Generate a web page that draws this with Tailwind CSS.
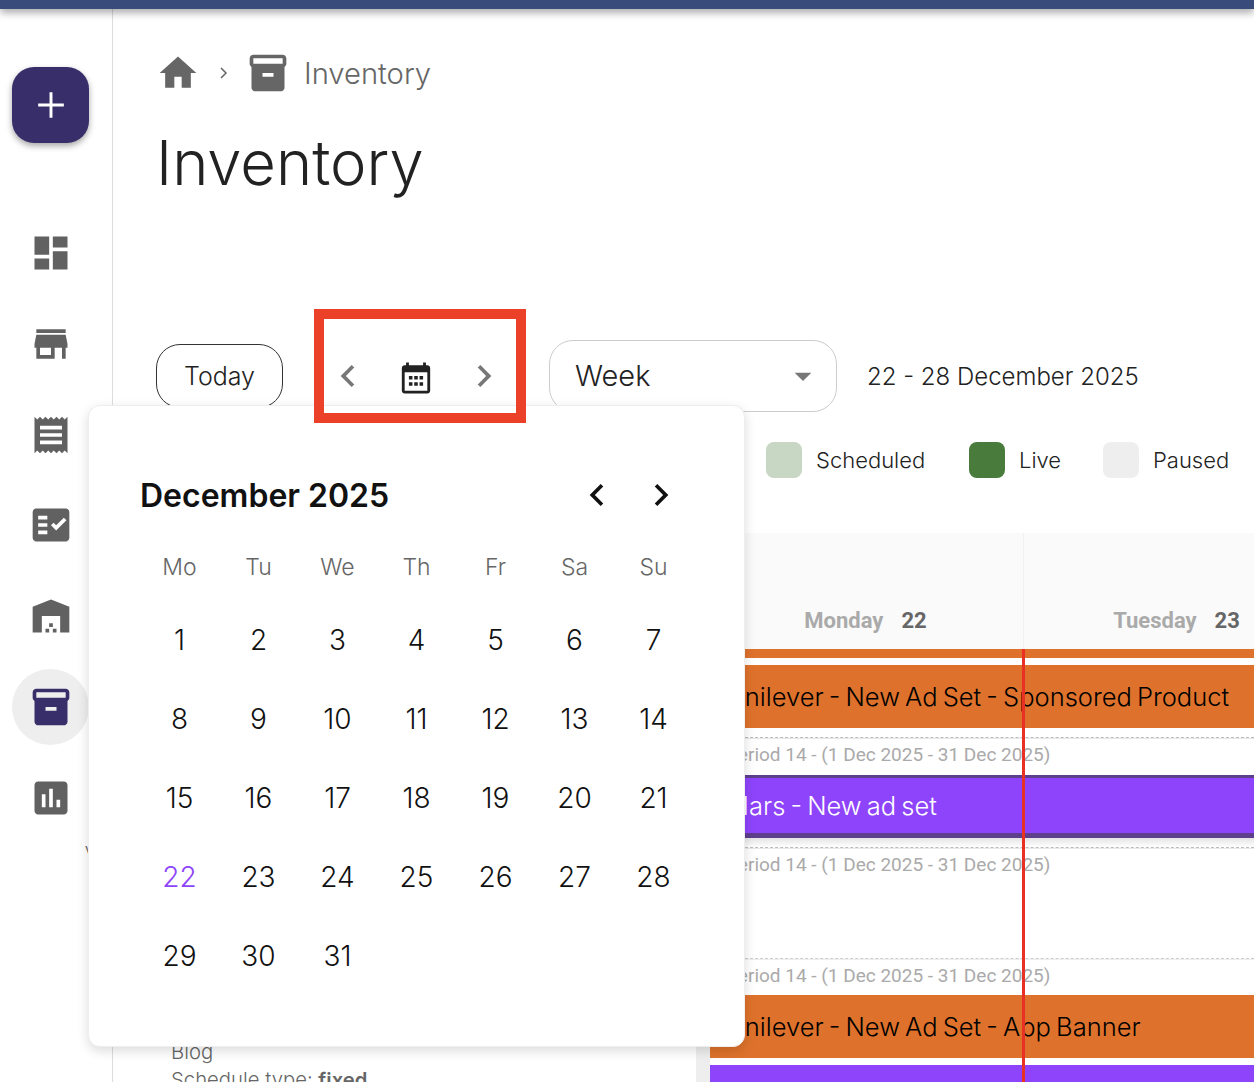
<!DOCTYPE html>
<html lang="en">
  <head>
    <meta charset="UTF-8" />
    <meta name="viewport" content="width=device-width, initial-scale=1.0" />
    <title>Inventory</title>
    <script src="https://cdn.jsdelivr.net/npm/@tailwindcss/browser@4"></script>
  </head>
  <body class="relative h-screen overflow-hidden bg-white font-['Inter',sans-serif] text-[#222]">
    <!-- Top bar -->
    <div class="relative z-10 h-[9px] bg-[#394b7b] shadow-[0_3px_8px_rgba(0,0,0,0.4)]"></div>

    <div class="flex h-[1073px]">
      <!-- Sidebar -->
      <aside class="w-[113px] shrink-0 border-r border-[#ddd] pt-[58px] pl-[12px] text-[#616161]">
        <button class="flex h-[76px] w-[77px] items-center justify-center rounded-[22px] bg-[#382e69] shadow-[0_3px_6px_rgba(0,0,0,0.35)]">
          <svg class="h-[44px] w-[44px]" viewBox="0 0 24 24" fill="none" stroke="#fff" stroke-width="1.6"><path d="M12 5v14M5 12h14"/></svg>
        </button>
        <nav class="mt-[72px] flex w-[77px] flex-col items-center gap-[14.8px]">
          <a class="flex h-[76px] w-[77px] items-center justify-center">
            <svg class="h-[44px] w-[44px]" viewBox="0 0 24 24" fill="currentColor"><path d="M3 13h8V3H3v10zm0 8h8v-6H3v6zm10 0h8V11h-8v10zm0-18v6h8V3h-8z"/></svg>
          </a>
          <a class="flex h-[76px] w-[77px] items-center justify-center">
            <svg class="h-[44px] w-[44px]" viewBox="0 0 24 24" fill="currentColor"><path d="M20 4H4v2h16V4zm1 10v-2l-1-5H4l-1 5v2h1v6h10v-6h4v6h2v-6h1zm-9 4H6v-4h6v4z"/></svg>
          </a>
          <a class="flex h-[76px] w-[77px] items-center justify-center">
            <svg class="h-[44px] w-[44px]" viewBox="0 0 24 24" fill="currentColor"><path d="M18 17H6v-2h12v2zm0-4H6v-2h12v2zm0-4H6V7h12v2zM3 22l1.5-1.5L6 22l1.5-1.5L9 22l1.5-1.5L12 22l1.5-1.5L15 22l1.5-1.5L18 22l1.5-1.5L21 22V2l-1.5 1.5L18 2l-1.5 1.5L15 2l-1.5 1.5L12 2l-1.5 1.5L9 2 7.5 3.5 6 2 4.5 3.5 3 2v20z"/></svg>
          </a>
          <a class="flex h-[76px] w-[77px] items-center justify-center">
            <svg class="h-[44px] w-[44px]" viewBox="0 0 24 24" fill="currentColor"><path fill-rule="evenodd" d="M20 3H4c-1.1 0-2 .9-2 2v14c0 1.1.9 2 2 2h16c1.1 0 2-.9 2-2V5c0-1.1-.9-2-2-2zM10 17H5v-2h5v2zm0-4H5v-2h5v2zm0-4H5V7h5v2zm4.82 6L12 12.16l1.41-1.41 1.41 1.42L18.99 8l1.42 1.42L14.82 15z"/></svg>
          </a>
          <a class="flex h-[76px] w-[77px] items-center justify-center">
            <svg class="h-[44px] w-[44px]" viewBox="0 0 24 24" fill="currentColor"><path d="M22 21V7L12 3 2 7v14h5v-9h10v9h5zm-11-2H9v2h2v-2zm2-3h-2v2h2v-2zm2 3h-2v2h2v-2z"/></svg>
          </a>
          <a class="flex h-[76px] w-[77px] items-center justify-center rounded-full bg-[#eee] text-[#382e69]">
            <svg class="h-[44px] w-[44px]" viewBox="0 0 24 24" fill="currentColor"><path d="M20 2H4c-1 0-2 .9-2 2v3.01c0 .72.43 1.34 1 1.69V20c0 1.1 1.1 2 2 2h14c.9 0 2-.9 2-2V8.7c.57-.35 1-.97 1-1.69V4c0-1.1-1-2-2-2zm-5 12H9v-2h6v2zm5-7H4V4l16-.02V7z"/></svg>
          </a>
          <a class="flex h-[76px] w-[77px] items-center justify-center">
            <svg class="h-[44px] w-[44px]" viewBox="0 0 24 24" fill="currentColor"><path d="M19 3H5c-1.1 0-2 .9-2 2v14c0 1.1.9 2 2 2h14c1.1 0 2-.9 2-2V5c0-1.1-.9-2-2-2zM9 17H7v-7h2v7zm4 0h-2V7h2v10zm4 0h-2v-4h2v4z"/></svg>
          </a>
        </nav>
      </aside>

      <!-- Main -->
      <main class="min-w-0 flex-1 overflow-hidden">
        <div class="pl-[43px]">
          <div class="mt-[42px] flex h-[44px] items-center text-[#666]">
            <svg class="h-[44px] w-[44px]" viewBox="0 0 24 24" fill="currentColor"><path d="M10 20v-6h4v6h5v-8h3L12 3 2 12h3v8z"/></svg>
            <svg class="ml-[12px] h-[24px] w-[24px]" viewBox="0 0 24 24" fill="none" stroke="#666" stroke-width="1.5"><path d="M9 7l5 5-5 5"/></svg>
            <svg class="ml-[10px] h-[44px] w-[44px]" viewBox="0 0 24 24" fill="currentColor"><path d="M20 2H4c-1 0-2 .9-2 2v3.01c0 .72.43 1.34 1 1.69V20c0 1.1 1.1 2 2 2h14c.9 0 2-.9 2-2V8.7c.57-.35 1-.97 1-1.69V4c0-1.1-1-2-2-2zm-5 12H9v-2h6v2zm5-7H4V4l16-.02V7z"/></svg>
            <span class="ml-[14px] pt-[2px] text-[29.2px] font-light text-[#666]">Inventory</span>
          </div>
          <h1 class="mt-[29px] h-[80px] text-[61.5px] leading-[78px] font-light text-[#222]">Inventory</h1>

          <!-- Toolbar -->
          <div class="mt-[136px] flex h-[72px] items-center">
            <button class="h-[64px] w-[127px] rounded-[24px] border border-[#333] pt-[2px] text-[25px] font-light">Today</button>
            <div class="mr-[43px] ml-[43px] flex items-center gap-[29px]">
              <svg class="h-[44px] w-[44px]" viewBox="0 0 24 24" fill="#777"><path d="M15.41 7.41 14 6l-6 6 6 6 1.41-1.41L10.83 12z"/></svg>
              <svg class="mt-[4px] h-[34px] w-[34px]" viewBox="0 0 24 24" fill="#222"><path fill-rule="evenodd" d="M20 3h-1V1h-2v2H7V1H5v2H4c-1.1 0-2 .9-2 2v16c0 1.1.9 2 2 2h16c1.1 0 2-.9 2-2V5c0-1.1-.9-2-2-2zm0 18H4V8h16v13z"/><path d="M7 10.5h2.5V13H7zM10.75 10.5h2.5V13h-2.5zM14.5 10.5H17V13h-2.5zM7 15h2.5v2.5H7zM10.75 15h2.5v2.5h-2.5zM14.5 15H17v2.5h-2.5z"/></svg>
              <svg class="h-[44px] w-[44px]" viewBox="0 0 24 24" fill="#777"><path d="M10 6 8.59 7.41 13.17 12l-4.58 4.59L10 18l6-6z"/></svg>
            </div>
            <div class="flex h-[72px] w-[288px] items-center justify-between rounded-[24px] border border-[#ccc] pr-[13px] pl-[25px] text-[29px] font-light">
              <span>Week</span>
              <svg class="h-[40px] w-[40px]" viewBox="0 0 24 24" fill="#777"><path d="M7 10l5 5 5-5z"/></svg>
            </div>
            <span class="ml-[30px] pt-[2px] text-[24px] font-light whitespace-nowrap">22 - 28 December 2025</span>
          </div>

          <!-- Legend -->
          <div class="mt-[30px] flex h-[36px] items-center pl-[610px] text-[22px] font-light">
            <div class="flex w-[203px] shrink-0 items-center gap-[14px]"><span class="h-[36px] w-[36px] rounded-lg bg-[#c8d7c4]"></span>Scheduled</div>
            <div class="flex w-[134px] shrink-0 items-center gap-[14px]"><span class="h-[36px] w-[36px] rounded-lg bg-[#487b3c]"></span>Live</div>
            <div class="flex shrink-0 items-center gap-[14px]"><span class="h-[36px] w-[36px] rounded-lg bg-[#eee]"></span>Paused</div>
          </div>
        </div>

        <!-- Lower section -->
        <div class="mt-[55px] flex h-[549px]">
          <div class="w-[583px] shrink-0 pt-[505px] pl-[58px] text-[20.3px] leading-[28px] font-light text-[#666]">
            <p>Blog</p>
            <p class="whitespace-nowrap">Schedule type: <b class="font-semibold">fixed</b></p>
          </div>
          <div class="w-[14px] shrink-0 bg-[#eee]"></div>

          <!-- Gantt -->
          <div class="relative min-w-0 flex-1 overflow-hidden font-['Roboto',sans-serif]">
            <div class="flex h-[116px] bg-[#fafafa]">
              <div class="flex w-[314px] shrink-0 items-end justify-center gap-[18px] border-r border-[#f0f0f0] pr-[2px] pb-[12px] text-[22px] font-bold text-[#aaa]">Monday <span class="text-[#666]">22</span></div>
              <div class="flex w-[313px] shrink-0 items-end justify-center gap-[18px] pr-[8px] pb-[12px] text-[22px] font-bold text-[#aaa]">Tuesday <span class="text-[#666]">23</span></div>
            </div>
            <div class="h-[9px] bg-[#de722c]"></div>
            <div class="mt-[7px] flex h-[63px] items-center bg-[#de722c] pt-[2px] pl-[16px] font-['Inter',sans-serif] text-[25.5px] font-light [word-spacing:-2px] whitespace-nowrap text-black">Unilever - New Ad Set - Sponsored Product</div>
            <div class="mt-[9px] h-[38px] border-t border-dashed border-[#bbb] pt-[3px] pl-[16px] text-[19px] text-[#aaa] shadow-[inset_0_1px_0_#e8e8e8]">Period 14 - (1 Dec 2025 - 31 Dec 2025)</div>
            <div class="flex h-[63px] items-center border-t-[3px] border-b-[5px] border-[#5d3f8c] bg-[#8e44fb] pt-[1px] pl-[16px] font-['Inter',sans-serif] text-[25.5px] font-light [word-spacing:-2px] whitespace-nowrap text-white">Mars - New ad set</div>
            <div class="h-[9px] bg-gradient-to-b from-[#e4e4e4] to-white"></div>
            <div class="h-[111px] border-t border-dashed border-[#bbb] pt-[3px] pl-[16px] text-[19px] text-[#aaa] shadow-[inset_0_1px_0_#e8e8e8]">Period 14 - (1 Dec 2025 - 31 Dec 2025)</div>
            <div class="h-[37px] border-t border-dashed border-[#ccc] pt-[3px] pl-[16px] text-[19px] text-[#aaa] shadow-[inset_0_1px_0_#eee]">Period 14 - (1 Dec 2025 - 31 Dec 2025)</div>
            <div class="flex h-[63px] items-center bg-[#de722c] pt-[2px] pl-[16px] font-['Inter',sans-serif] text-[25.5px] font-light [word-spacing:-2px] whitespace-nowrap text-black">Unilever - New Ad Set - App Banner</div>
            <div class="mt-[7px] h-[20px] bg-[#8e44fb]"></div>
            <!-- Current time marker -->
            <div class="absolute top-[116px] bottom-0 left-[312px] w-[3px] bg-[#e93025]"></div>
          </div>
        </div>
      </main>
    </div>

    <!-- Scrap of a menu showing past the popover's left edge -->
    <div class="absolute top-[842px] left-[80px] h-[48px] w-[9px] overflow-hidden bg-white pl-[5px] text-[14px] leading-[14px] text-[#666]">v</div>

    <!-- Datepicker popover -->
    <div class="absolute top-[405px] left-[88px] h-[642px] w-[657px] rounded-xl border border-[#eee] bg-white pt-[59px] pl-[51px] shadow-[0_4px_12px_rgba(0,0,0,0.14)]">
      <div class="flex h-[60px] w-[543px] items-center justify-between">
        <span class="pt-[1px] text-[32px] font-semibold text-[#111]">December 2025</span>
        <div class="flex gap-[20px]">
          <svg class="h-[44px] w-[44px]" viewBox="0 0 24 24" fill="#111"><path d="M15.41 7.41 14 6l-6 6 6 6 1.41-1.41L10.83 12z"/></svg>
          <svg class="h-[44px] w-[44px]" viewBox="0 0 24 24" fill="#111"><path d="M10 6 8.59 7.41 13.17 12l-4.58 4.59L10 18l6-6z"/></svg>
        </div>
      </div>
      <div class="mt-[10px] grid w-[553px] grid-cols-7 text-center">
        <div class="flex h-[65px] items-center justify-center text-[23px] font-light text-[#666]">Mo</div>
        <div class="flex h-[65px] items-center justify-center text-[23px] font-light text-[#666]">Tu</div>
        <div class="flex h-[65px] items-center justify-center text-[23px] font-light text-[#666]">We</div>
        <div class="flex h-[65px] items-center justify-center text-[23px] font-light text-[#666]">Th</div>
        <div class="flex h-[65px] items-center justify-center text-[23px] font-light text-[#666]">Fr</div>
        <div class="flex h-[65px] items-center justify-center text-[23px] font-light text-[#666]">Sa</div>
        <div class="flex h-[65px] items-center justify-center text-[23px] font-light text-[#666]">Su</div>
      </div>
      <div id="days" class="grid w-[553px] grid-cols-7 text-[28px] font-light text-[#111]">
        <div class="flex h-[79px] items-center justify-center">1</div>
        <div class="flex h-[79px] items-center justify-center">2</div>
        <div class="flex h-[79px] items-center justify-center">3</div>
        <div class="flex h-[79px] items-center justify-center">4</div>
        <div class="flex h-[79px] items-center justify-center">5</div>
        <div class="flex h-[79px] items-center justify-center">6</div>
        <div class="flex h-[79px] items-center justify-center">7</div>
        <div class="flex h-[79px] items-center justify-center">8</div>
        <div class="flex h-[79px] items-center justify-center">9</div>
        <div class="flex h-[79px] items-center justify-center">10</div>
        <div class="flex h-[79px] items-center justify-center">11</div>
        <div class="flex h-[79px] items-center justify-center">12</div>
        <div class="flex h-[79px] items-center justify-center">13</div>
        <div class="flex h-[79px] items-center justify-center">14</div>
        <div class="flex h-[79px] items-center justify-center">15</div>
        <div class="flex h-[79px] items-center justify-center">16</div>
        <div class="flex h-[79px] items-center justify-center">17</div>
        <div class="flex h-[79px] items-center justify-center">18</div>
        <div class="flex h-[79px] items-center justify-center">19</div>
        <div class="flex h-[79px] items-center justify-center">20</div>
        <div class="flex h-[79px] items-center justify-center">21</div>
        <div class="flex h-[79px] items-center justify-center text-[#8e44fb]">22</div>
        <div class="flex h-[79px] items-center justify-center">23</div>
        <div class="flex h-[79px] items-center justify-center">24</div>
        <div class="flex h-[79px] items-center justify-center">25</div>
        <div class="flex h-[79px] items-center justify-center">26</div>
        <div class="flex h-[79px] items-center justify-center">27</div>
        <div class="flex h-[79px] items-center justify-center">28</div>
        <div class="flex h-[79px] items-center justify-center">29</div>
        <div class="flex h-[79px] items-center justify-center">30</div>
        <div class="flex h-[79px] items-center justify-center">31</div>
      </div>
    </div>

    <!-- Annotation box round the date controls -->
    <div class="pointer-events-none absolute top-[309px] left-[314px] h-[114px] w-[212px] border-[10px] border-[#ea4128]"></div>
  </body>
</html>
